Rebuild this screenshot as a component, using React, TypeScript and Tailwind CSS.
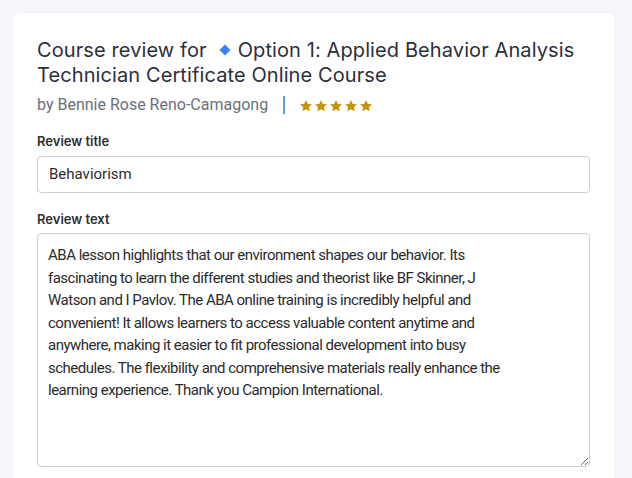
const review =
  "ABA lesson highlights that our environment shapes our behavior. Its fascinating to learn the different studies and theorist like BF Skinner, J Watson and I Pavlov. The ABA online training is incredibly helpful and convenient! It allows learners to access valuable content anytime and anywhere, making it easier to fit professional development into busy schedules. The flexibility and comprehensive materials really enhance the learning experience. Thank you Campion International.";

function Star() {
  return (
    <svg viewBox="0 0 24 24" className="w-[14px] h-[14px]" fill="#c8920d">
      <path d="M12 1.8l3.1 6.6 7.1.8-5.3 4.9 1.5 7.1L12 17.6l-6.4 3.6 1.5-7.1L1.8 9.2l7.1-.8z" />
    </svg>
  );
}

export default function App() {
  return (
    <div className="min-h-[478px] bg-[#f5f6fa] pt-[13px] pl-[13px]">
      <div className="w-[601px] bg-white rounded-md shadow-[0_0_2px_rgba(0,0,0,0.04)] px-6 pt-[25px] pb-4">
        {/* Heading */}
        <h1 className="font-['Inter',sans-serif] text-[20px] leading-[25px] tracking-[0.1px] text-[#2d2f3a]">
          Course review for
          <svg viewBox="0 0 12 12" className="inline-block w-[12px] h-[12px] ml-[12px] mr-[7px] mb-[4px] align-middle">
            <path d="M6 0.5L11.5 6 6 11.5 0.5 6z" fill="#3b82f6" />
          </svg>
          Option 1: Applied Behavior Analysis Technician Certificate Online Course
        </h1>

        <div className="mt-[5px] flex items-center font-['Roboto',sans-serif] text-[16px] text-[#6b6f7a]">
          <span>by Bennie Rose Reno-Camagong</span>
          <span className="ml-[15px] mr-[14px] w-[2px] h-[18px] bg-[#5b9be0]" />
          <div className="flex items-center gap-[1px] mt-[2px]">
            <Star />
            <Star />
            <Star />
            <Star />
            <Star />
          </div>
        </div>

        {/* Review title */}
        <label className="block mt-[15px] font-['Inter',sans-serif] font-semibold text-[13px] text-[#2e2e2e]">
          Review title
        </label>
        <div className="mt-[4px] h-[37px] border border-[#cfcfcf] rounded flex items-center px-[11px] font-['Roboto',sans-serif] text-[15px] text-[#2b2b2b]">
          Behaviorism
        </div>

        {/* Review text */}
        <label className="block mt-[17px] font-['Inter',sans-serif] font-semibold text-[13px] text-[#2e2e2e]">
          Review text
        </label>
        <textarea
          readOnly
          value={review}
          className="mt-[4px] block w-full h-[234px] border border-[#cfcfcf] rounded pl-[10px] pr-[74px] py-[10px] font-['Roboto',sans-serif] text-[15px] tracking-[-0.5px] leading-[22.5px] text-[#2b2b2b] outline-none resize-y"
        />
      </div>
    </div>
  );
}
